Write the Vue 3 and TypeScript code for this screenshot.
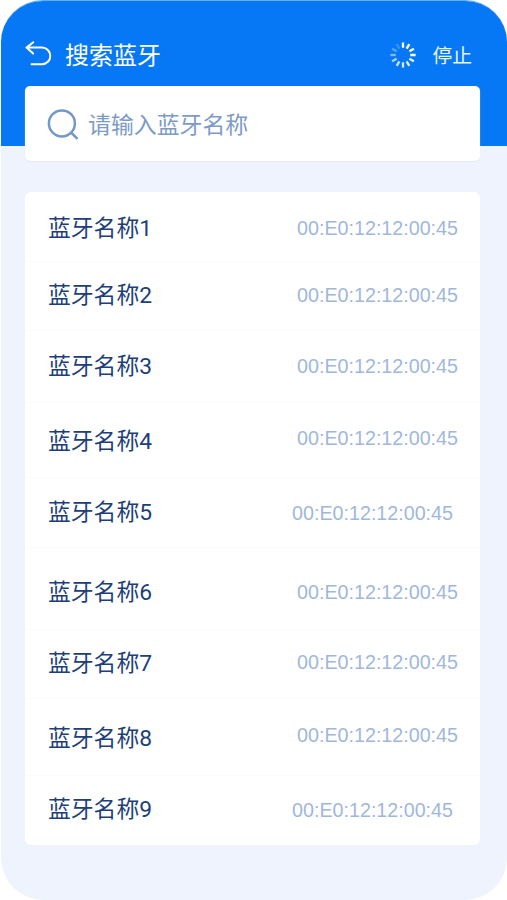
<script setup lang="ts">
interface Device {
  name: string
  mac: string
  height: number
  nameTop: number
  macTop: number
  inset: number
}

const mac = '00:E0:12:12:00:45'

const devices: Device[] = [
  { name: '蓝牙名称1', mac, height: 70, nameTop: 22, macTop: 21, inset: 22 },
  { name: '蓝牙名称2', mac, height: 69, nameTop: 19, macTop: 18, inset: 22 },
  { name: '蓝牙名称3', mac, height: 72, nameTop: 21, macTop: 20, inset: 22 },
  { name: '蓝牙名称4', mac, height: 75, nameTop: 24, macTop: 20, inset: 22 },
  { name: '蓝牙名称5', mac, height: 70, nameTop: 20, macTop: 20, inset: 27 },
  { name: '蓝牙名称6', mac, height: 82, nameTop: 30, macTop: 29, inset: 22 },
  { name: '蓝牙名称7', mac, height: 69, nameTop: 19, macTop: 17, inset: 22 },
  { name: '蓝牙名称8', mac, height: 77, nameTop: 25, macTop: 21, inset: 22 },
  { name: '蓝牙名称9', mac, height: 69, nameTop: 19, macTop: 19, inset: 27 },
]

const spokes = [1, 1, 1, 1, 0.92, 0.88, 0.84, 0.78, 0.66, 0.5, 0.34, 0.2]
</script>

<template>
  <main class="screen">
    <header class="header">
      <div class="bar">
        <svg class="back" viewBox="0 0 28 28" aria-hidden="true">
          <path d="M8.2 1.2 L1.5 6.6 L8.2 12.6 M2 6.6 H17 A8.3 8.3 0 0 1 17 23.2 H6.5" />
        </svg>
        <h1 class="title">搜索蓝牙</h1>
        <svg class="spinner" viewBox="-13 -13 26 26" aria-hidden="true">
          <line
            v-for="(alpha, i) in spokes"
            :key="i"
            x1="0" y1="-7.3" x2="0" y2="-12.6"
            :opacity="alpha"
            :transform="`rotate(${i * 30})`"
          />
        </svg>
        <button class="stop" type="button">停止</button>
      </div>
      <label class="search">
        <svg class="glass" viewBox="0 0 32 32" aria-hidden="true">
          <circle cx="14.9" cy="14.4" r="13" />
          <path d="M24 23.5 L30.5 29.8" />
        </svg>
        <span class="placeholder">请输入蓝牙名称</span>
      </label>
    </header>
    <ul class="list">
      <li
        v-for="device in devices"
        :key="device.name"
        class="row"
        :style="{ height: device.height + 'px', paddingRight: device.inset + 'px' }"
      >
        <span class="name" :style="{ marginTop: device.nameTop + 'px' }">{{ device.name }}</span>
        <span class="mac" :style="{ marginTop: device.macTop + 'px' }">{{ device.mac }}</span>
      </li>
    </ul>
  </main>
</template>

<style>
body {
  margin: 0;
  background: #fff;
}
</style>

<style scoped>
.screen {
  box-sizing: border-box;
  height: 900px;
  margin-left: 1px;
  overflow: hidden;
  border-top: 1px solid #65aefb;
  border-radius: 42px;
  background: #eff3fd;
  font-family: Roboto, "Noto Sans CJK SC", sans-serif;
}
.header {
  box-sizing: border-box;
  height: 145px;
  padding: 29px 27px 0 24px;
  background: #0678f5;
}
.bar {
  display: flex;
  align-items: center;
  height: 50px;
  margin-bottom: 6px;
  color: #fff;
}
.back {
  width: 28px;
  height: 28px;
  margin-right: 12px;
  fill: none;
  stroke: #fff;
  stroke-width: 2;
  stroke-linecap: round;
  stroke-linejoin: round;
}
.title {
  margin: 0;
  padding-top: 2px;
  font-size: 24px;
  font-weight: 400;
  line-height: 50px;
}
.spinner {
  width: 26px;
  height: 26px;
  margin-left: auto;
  margin-right: 16px;
  stroke: #fff;
  stroke-width: 2.3;
  stroke-linecap: butt;
}
.stop {
  margin: 0 8px 0 0;
  padding: 3px 0 0;
  border: 0;
  background: none;
  color: #e9f3ff;
  font-family: inherit;
  font-size: 19.8px;
  line-height: 50px;
}
.search {
  display: flex;
  align-items: center;
  box-sizing: border-box;
  height: 75px;
  padding: 2px 0 0 22px;
  gap: 9px;
  border-radius: 5px;
  background: #fff;
  box-shadow: 0 1px 1px #e1e7f2;
}
.glass {
  width: 32px;
  height: 32px;
  fill: none;
  stroke: #7299c5;
  stroke-width: 2.5;
}
.placeholder {
  padding-top: 2px;
  color: #7c9bc6;
  font-size: 22.9px;
  line-height: 34px;
}
.list {
  box-sizing: border-box;
  height: 653px;
  margin: 46px 27px 0 24px;
  padding: 0;
  border-radius: 6px;
  background: #fff;
  list-style: none;
}
.row {
  display: flex;
  align-items: flex-start;
  justify-content: space-between;
  box-sizing: border-box;
  padding-left: 23px;
  border-bottom: 1px solid #fafbfd;
}
.row:last-child {
  border-bottom: 0;
}
.name {
  color: #203e77;
  font-size: 22.8px;
  line-height: 30px;
}
.mac {
  color: #9fb8da;
  font-family: "Liberation Sans", sans-serif;
  font-size: 19.7px;
  line-height: 30px;
}
</style>
